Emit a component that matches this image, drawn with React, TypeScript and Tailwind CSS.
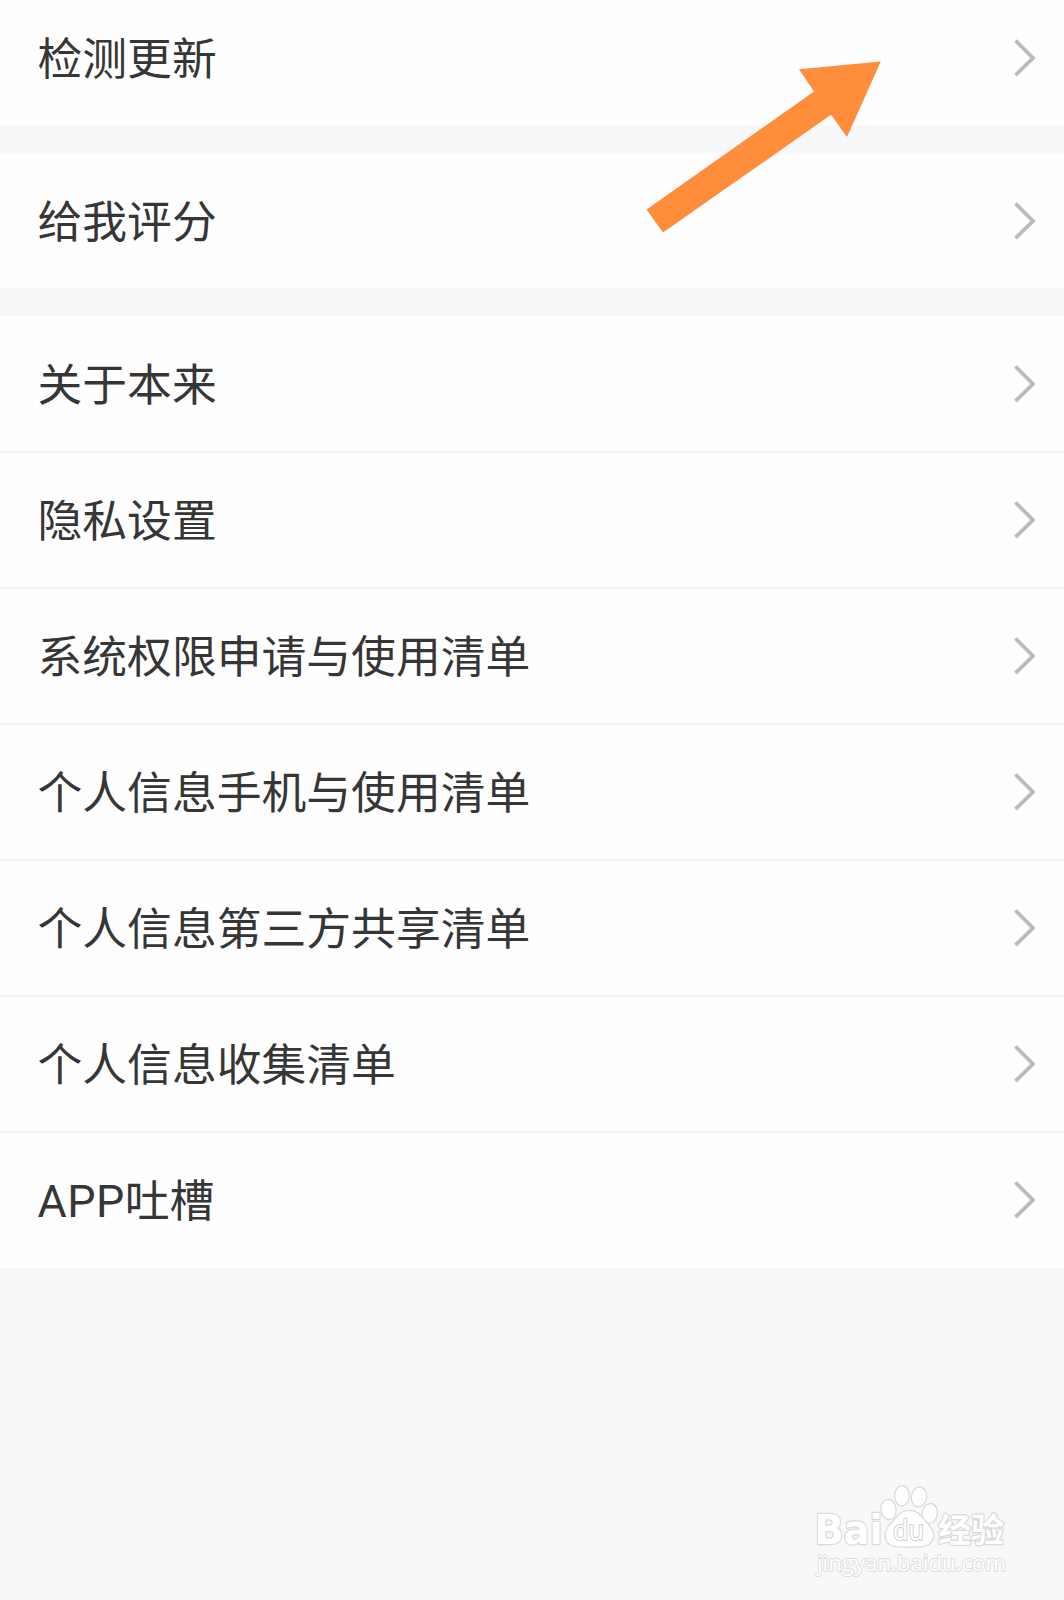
const groups: string[][] = [
  ["检测更新"],
  ["给我评分"],
  [
    "关于本来",
    "隐私设置",
    "系统权限申请与使用清单",
    "个人信息手机与使用清单",
    "个人信息第三方共享清单",
    "个人信息收集清单",
    "APP吐槽",
  ],
];

function Chevron() {
  return (
    <svg className="h-[42px] w-[26px] shrink-0" viewBox="0 0 26 42" fill="none">
      <path d="M4.5 3.5 L22 21 L4.5 38.2" stroke="#bbbbbb" strokeWidth="3.8" />
    </svg>
  );
}

function Label({ text }: { text: string }) {
  const latin = text.match(/^[A-Z]+/)?.[0] ?? "";
  return (
    <span className="pt-[4px] text-[44.8px] leading-[64px] whitespace-nowrap">
      {latin && <span className="tracking-[0.5px]">{latin}</span>}
      {text.slice(latin.length)}
    </span>
  );
}

function Row({ label, divider }: { label: string; divider: boolean }) {
  return (
    <button
      className={
        divider
          ? "flex h-[136.1px] w-full items-center justify-between border-b-2 border-[#f4f4f5] pt-px pr-[27px] pl-[37.5px] text-left"
          : "flex h-[135px] w-full items-center justify-between pr-[27px] pl-[37.5px] text-left"
      }
    >
      <Label text={label} />
      <Chevron />
    </button>
  );
}

function Arrow() {
  return (
    <svg
      className="pointer-events-none absolute top-[60px] left-[645px]"
      width="238"
      height="175"
      viewBox="645 60 238 175"
    >
      <path
        d="M880.8 61.5 L847 137 L831 114.8 L663 232.5 L646.5 209.5 L814 91.5 L799 69.3 Z"
        fill="#ff8e3c"
      />
    </svg>
  );
}

function Watermark() {
  return (
    <svg
      className="pointer-events-none absolute right-[50px] bottom-[16px]"
      width="204"
      height="104"
      viewBox="810 1480 204 104"
      fill="#ffffff"
      stroke="#d9d9db"
      strokeWidth="2.4"
      strokeLinejoin="round"
      paintOrder="stroke"
    >
      <text x="814.5" y="1543.5" fontSize="40" fontWeight="700" textLength="68" lengthAdjust="spacingAndGlyphs" fontFamily="DejaVu Sans, sans-serif">
        Bai
      </text>
      <ellipse cx="888.5" cy="1509.5" rx="7" ry="9.5" transform="rotate(-8 888.5 1509.5)" />
      <ellipse cx="902" cy="1495.8" rx="6.8" ry="9.6" />
      <ellipse cx="919" cy="1497" rx="7" ry="9.4" transform="rotate(10 919 1497)" />
      <ellipse cx="929.8" cy="1513.5" rx="7" ry="9.4" transform="rotate(10 929.8 1513.5)" />
      <path d="M909 1511 C900 1511 897 1518 892 1523 C887 1528 885 1532 886 1538 C888 1547 897 1546.5 909 1546.5 C921 1546.5 931 1547 933 1537 C934 1531 929 1526 925 1521 C921 1516 917 1511 909 1511 Z" />
      <text x="893" y="1540" fontSize="28" textLength="31" lengthAdjust="spacingAndGlyphs" fontFamily="Open Sans, sans-serif" strokeWidth="2.2" stroke="#d2d2d4">
        du
      </text>
      <text x="938" y="1541.5" fontSize="33" fontWeight="700" textLength="66" lengthAdjust="spacingAndGlyphs" fontFamily="Noto Sans CJK SC, sans-serif">
        经验
      </text>
      <text x="817" y="1570.5" fontSize="22" textLength="189" lengthAdjust="spacingAndGlyphs" fontFamily="Open Sans, sans-serif" strokeWidth="2" stroke="#dddddf">
        jingyan.baidu.com
      </text>
    </svg>
  );
}

export default function App() {
  return (
    <main className="relative h-[1600px] w-full overflow-hidden bg-[#f8f8fb] font-['Roboto','Noto_Sans_CJK_SC',sans-serif] text-[#363636]">
      <div className="-mt-[9.6px] flex flex-col gap-[28px]">
        {groups.map((items) => (
          <section key={items[0]} className="bg-[#fefefe]">
            {items.map((label, i) => (
              <Row key={label} label={label} divider={i < items.length - 1} />
            ))}
          </section>
        ))}
      </div>
      <Arrow />
      <Watermark />
    </main>
  );
}
